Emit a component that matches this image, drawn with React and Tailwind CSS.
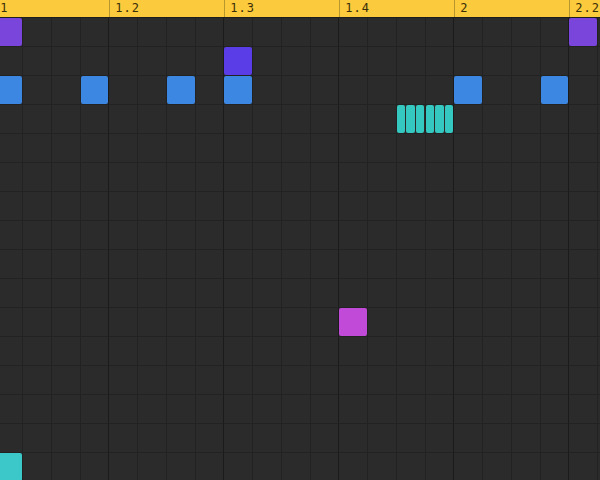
const COLS = 22;
const ROWS = 16;

const notes = {
  "0-0": "bg-[#7a45db]",
  "0-20": "bg-[#7a45db]",
  "1-8": "bg-[#5a3de6]",
  "2-0": "bg-[#3b87e2]",
  "2-3": "bg-[#3b87e2]",
  "2-6": "bg-[#3b87e2]",
  "2-8": "bg-[#3b87e2]",
  "2-16": "bg-[#3b87e2]",
  "2-19": "bg-[#3b87e2]",
  "10-12": "bg-[#c14ad9]",
  "15-0": "bg-[#3cc8c8]",
};

const rolls = { "3-14": true, "3-15": true };

const beats = ["1", "1.2", "1.3", "1.4", "2", "2.2"];

function Cell({ r, c }) {
  const key = `${r}-${c}`;
  const beatEdge = c % 4 === 3;
  return (
    <div
      className={`h-[29px] border-b border-[#222222] bg-[#2b2b2b] ${
        beatEdge ? "border-r border-r-[#1b1b1b]" : "border-r border-r-[#222222]"
      }`}
    >
      {notes[key] && (
        <div className={`h-full w-full rounded-[2px] ${notes[key]}`} />
      )}
      {rolls[key] && (
        <div className="flex h-full w-full gap-px">
          {[0, 1, 2].map((i) => (
            <div key={i} className="h-full flex-1 rounded-[2px] bg-[#35c8c0]" />
          ))}
        </div>
      )}
    </div>
  );
}

export default function App() {
  return (
    <div className="h-[480px] w-[600px] overflow-hidden bg-[#222222]">
      <div className="-ml-[5.75px] w-[640px]">
        <div className="flex h-[18px] border-b border-[#1d1d1d] bg-[#fbcb3d]">
          {beats.map((b) => (
            <div
              key={b}
              className="h-full w-[115px] shrink-0 border-l border-[#b8962e] pl-[5px] font-['DejaVu_Sans_Mono',monospace] text-[12px] leading-[17px] tracking-[1px] text-[#3a2e08]"
            >
              {b}
            </div>
          ))}
        </div>
        <div className="grid grid-cols-[repeat(22,28.75px)]">
          {Array.from({ length: ROWS }).map((_, r) =>
            Array.from({ length: COLS }).map((_, c) => (
              <Cell key={`${r}-${c}`} r={r} c={c} />
            ))
          )}
        </div>
      </div>
    </div>
  );
}
